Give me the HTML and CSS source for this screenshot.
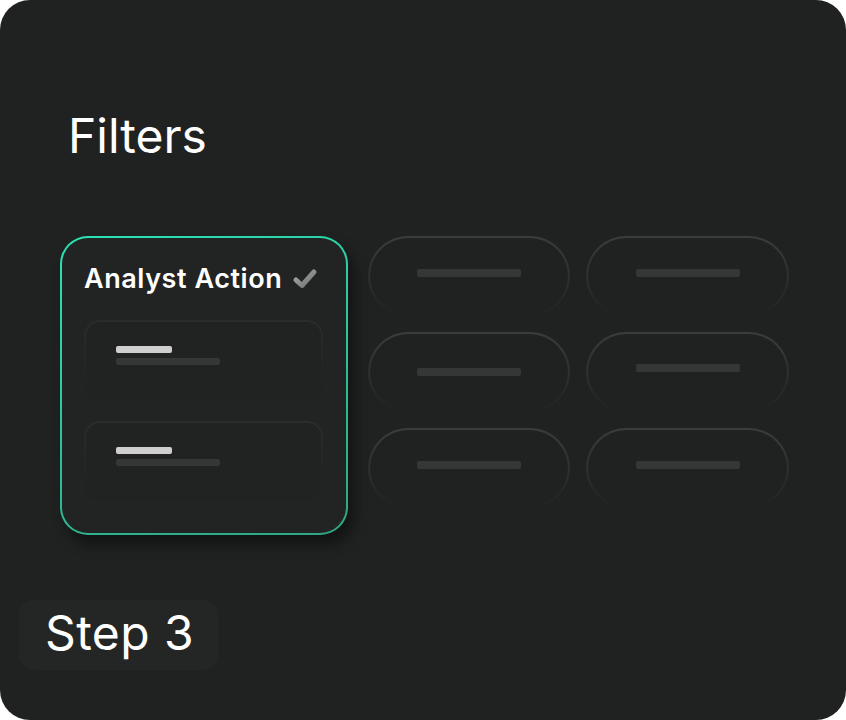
FILE: index.html
```html
<!DOCTYPE html>
<html lang="en">
<head>
    <meta charset="UTF-8">
    <title>Filters</title>
    <link rel="stylesheet" href="styles.css">
</head>
<body>
<div class="frame">
    <h1 class="title">Filters</h1>
    <div class="board">
        <div class="card">
            <div class="card-head">
                <span>Analyst Action</span>
                <svg class="check" width="26" height="22" viewBox="0 0 26 22">
                    <defs>
                        <linearGradient id="chk" x1="0" y1="0" x2="1" y2="1">
                            <stop offset="0" stop-color="#a9a9a9"/>
                            <stop offset="1" stop-color="#6f6f6f"/>
                        </linearGradient>
                    </defs>
                    <path d="M4 12 L10 17.5 L22 4" fill="none" stroke="url(#chk)" stroke-width="5" stroke-linecap="round" stroke-linejoin="round"/>
                </svg>
            </div>
            <div class="option">
                <div class="line light"></div>
                <div class="line dim"></div>
            </div>
            <div class="option">
                <div class="line light"></div>
                <div class="line dim"></div>
            </div>
        </div>
        <div class="pills">
            <div class="pill"><div class="bar"></div></div>
            <div class="pill"><div class="bar"></div></div>
            <div class="pill low"><div class="bar"></div></div>
            <div class="pill high"><div class="bar"></div></div>
            <div class="pill"><div class="bar"></div></div>
            <div class="pill"><div class="bar"></div></div>
        </div>
    </div>
    <div class="step">Step 3</div>
</div>
</body>
</html>
```

FILE: styles.css
```css
*{
    margin: 0;
    padding: 0;
    box-sizing: border-box;
}
body{
    background: #ffffff;
    font-family: Inter, "Noto Sans", sans-serif;
}
.frame{
    width: 846px;
    height: 720px;
    background: #202221;
    border-radius: 30px;
    display: flex;
    flex-direction: column;
    overflow: hidden;
}
.title{
    font-size: 48px;
    font-weight: 400;
    color: #ffffff;
    line-height: 56px;
    margin: 108px 0 0 68px;
}
.board{
    display: flex;
    margin: 72px 0 0 60px;
}
.card{
    width: 288px;
    height: 299px;
    border: 2px solid transparent;
    border-radius: 28px;
    background: linear-gradient(#222423, #222423) padding-box,
                linear-gradient(160deg, #2be3b4, #2fa583) border-box;
    box-shadow: 6px 10px 14px rgba(0, 0, 0, 0.45);
    padding: 21px 23px 0 22px;
}
.card-head{
    display: flex;
    align-items: center;
    gap: 10px;
    color: #ffffff;
    font-size: 27px;
    font-weight: 600;
    letter-spacing: 0.55px;
    height: 38px;
}
.check{
    margin-top: 2px;
}
.option{
    height: 80px;
    margin-top: 23px;
    border: 2px solid transparent;
    border-radius: 16px;
    background: linear-gradient(#212322, #212322) padding-box,
                linear-gradient(#2b2d2c, #212322 80%) border-box;
    padding: 24px 0 0 30px;
}
.option + .option{
    margin-top: 21px;
}
.line{
    height: 7px;
    border-radius: 2px;
}
.light{
    width: 56px;
    background: #cfcfcf;
}
.dim{
    width: 104px;
    margin-top: 5px;
    background: #353736;
}
.pills{
    display: grid;
    grid-template-columns: 202px 203px;
    grid-auto-rows: 80px;
    column-gap: 16px;
    row-gap: 16px;
    margin-left: 20px;
}
.pill{
    border: 2px solid transparent;
    border-radius: 40px;
    background: linear-gradient(#202221, #202221) padding-box,
                linear-gradient(#3b3d3c, #2c2e2d 60%, #202221) border-box;
    display: flex;
    justify-content: center;
    padding-top: 31px;
}
.pill.low{
    padding-top: 34px;
}
.pill.high{
    padding-top: 30px;
}
.bar{
    width: 104px;
    height: 8px;
    border-radius: 2px;
    background: #353736;
}
.step{
    align-self: flex-start;
    margin: 65px 0 0 19px;
    width: 199px;
    height: 70px;
    border-radius: 14px;
    background: #242625;
    color: #ffffff;
    font-size: 48px;
    font-weight: 400;
    letter-spacing: 0.4px;
    line-height: 66px;
    padding-left: 26px;
}
```
